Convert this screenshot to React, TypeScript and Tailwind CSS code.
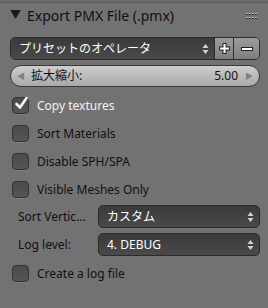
function Arrows() {
  return (
    <svg width="7" height="12" viewBox="0 0 7 12" className="shrink-0">
      <path d="M3.5 1 L6.5 5 L0.5 5 Z" fill="#d4d4d4" />
      <path d="M3.5 11 L6.5 7 L0.5 7 Z" fill="#d4d4d4" />
    </svg>
  );
}

function Checkbox({ label, checked }: { label: string; checked?: boolean }) {
  return (
    <div className="flex items-center h-[17px] pl-3">
      <div className="relative w-[17px] h-[17px] rounded-[4px] border border-[#333] bg-gradient-to-b from-[#4b4b4b] to-[#555] shadow-[0_1px_0_rgba(255,255,255,0.1)]">
        {checked && (
          <svg width="17" height="17" viewBox="0 0 17 17" className="absolute left-[0px] top-[-3px]">
            <path d="M3.5 9 L7 12.5 L13.5 3" fill="none" stroke="#f4f4f4" strokeWidth="2.6" strokeLinecap="round" strokeLinejoin="round" />
          </svg>
        )}
      </div>
      <span className={`ml-[8px] text-[12px] ${checked ? "text-[#f2f2f2]" : "text-[#111]"}`}>{label}</span>
    </div>
  );
}

function Select({ value }: { value: string }) {
  return (
    <div className="flex-1 flex items-center h-[23px] rounded-[5px] border border-[#2b2b2b] bg-gradient-to-b from-[#3a3a3a] to-[#4a4a4a] pl-2 pr-[5px]">
      <span className="flex-1 text-[12px] text-white">{value}</span>
      <Arrows />
    </div>
  );
}

export default function App() {
  return (
    <div className="w-[268px] h-[308px] bg-[#727272] overflow-hidden" style={{ fontFamily: '"Noto Sans", "Noto Sans CJK JP", sans-serif' }}>
      {/* previous panel remnant */}
      <div className="h-[3px] bg-[#6c6c6c] border-b border-[#5a5a5a]" />

      {/* HEADER */}
      <div className="flex items-center h-[25px] pl-[10px] pr-[11px]">
        <span className="text-[11px] text-[#1a1a1a] mr-[6px]">▼</span>
        <span className="flex-1 text-[14px] text-[#111]">Export PMX File (.pmx)</span>
        <div className="grid grid-cols-4 gap-x-[1px] gap-y-[2px]">
          {Array.from({ length: 8 }).map((_, i) => (
            <div key={i} className="w-[2px] h-[2px] bg-[#2e2e2e] border-t border-[#bdbdbd]" />
          ))}
        </div>
      </div>

      <div className="pl-[10px] pr-[8px] pt-[9px]">
        {/* PRESET */}
        <div className="flex h-[23px] rounded-[5px] border border-[#2b2b2b] overflow-hidden">
          <div className="flex-1 flex items-center bg-gradient-to-b from-[#3a3a3a] to-[#4a4a4a] pl-2 pr-[5px]">
            <span className="flex-1 text-[12px] text-white">プリセットのオペレータ</span>
            <Arrows />
          </div>
          <div className="w-[19px] flex items-center justify-center bg-gradient-to-b from-[#9c9c9c] to-[#7f7f7f] border-l border-[#2b2b2b]">
            <svg width="13" height="13" viewBox="0 0 13 13">
              <path d="M6.5 1 V12 M1 6.5 H12" stroke="#222" strokeWidth="4" />
              <path d="M6.5 2 V11 M2 6.5 H11" stroke="#fff" strokeWidth="2" />
            </svg>
          </div>
          <div className="w-[26px] flex items-center justify-center bg-gradient-to-b from-[#9c9c9c] to-[#7f7f7f] border-l border-[#2b2b2b]">
            <svg width="14" height="6" viewBox="0 0 14 6">
              <path d="M1 3 H13" stroke="#222" strokeWidth="4" />
              <path d="M2 3 H12" stroke="#fff" strokeWidth="2" />
            </svg>
          </div>
        </div>

        {/* SLIDER */}
        <div className="mt-[5px] flex items-center h-[22px] rounded-full border border-[#3a3a3a] bg-gradient-to-b from-[#cdcdcd] to-[#a9a9a9] px-[6px]">
          <span className="text-[8px] text-[#808080]">◀</span>
          <span className="ml-[6px] flex-1 text-[12px] text-[#111]">拡大縮小:</span>
          <span className="text-[12px] text-[#111]">5.00</span>
          <span className="ml-[7px] text-[8px] text-[#808080]">▶</span>
        </div>
      </div>

      {/* OPTIONS */}
      <div className="flex flex-col gap-[11px] mt-[10px]">
        <Checkbox label="Copy textures" checked />
        <Checkbox label="Sort Materials" />
        <Checkbox label="Disable SPH/SPA" />
        <Checkbox label="Visible Meshes Only" />
      </div>

      <div className="flex flex-col gap-[5px] mt-[7px] pr-[8px]">
        <div className="flex items-center">
          <span className="w-[98px] pl-[18px] text-[12px] text-[#111] truncate">Sort Vertic...</span>
          <Select value="カスタム" />
        </div>
        <div className="flex items-center">
          <span className="w-[98px] pl-[18px] text-[12px] text-[#111]">Log level:</span>
          <Select value="4. DEBUG" />
        </div>
      </div>

      <div className="mt-[9px]">
        <Checkbox label="Create a log file" />
      </div>
    </div>
  );
}
